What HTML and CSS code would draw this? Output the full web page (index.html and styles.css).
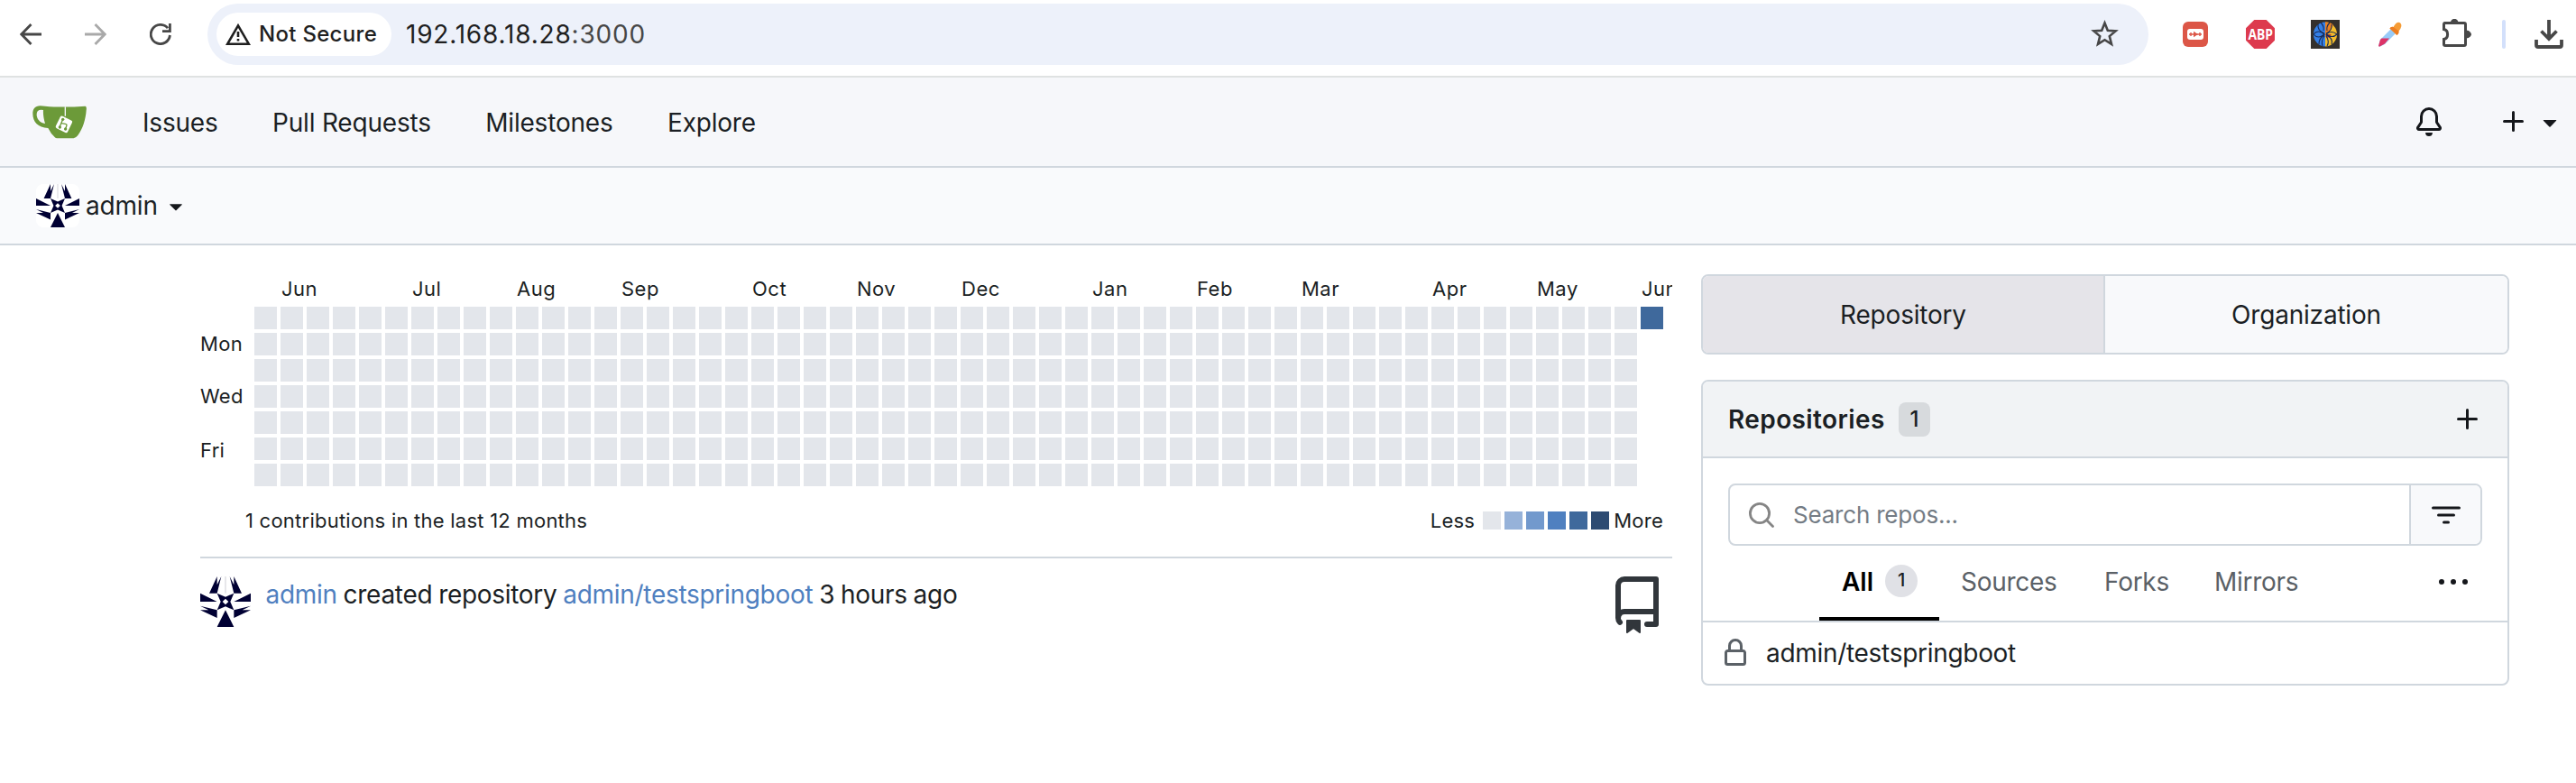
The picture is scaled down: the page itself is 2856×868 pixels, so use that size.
FILE: index.html
```html
<!DOCTYPE html>
<html lang="en">
<head>
<meta charset="utf-8">
<title>admin - Dashboard</title>
<link rel="stylesheet" href="styles.css">
</head>
<body>
<svg class="defs" width="0" height="0">
  <symbol id="avatar" viewBox="0 0 168 168">
    <rect width="168" height="168" fill="#fff"/>
    <path d="M84 0V56" stroke="#cfcfd6" stroke-width="3"/>
    <g fill="#000033">
      <path d="M30 56L56 0V28L70 0L56 56ZM138 56L112 0V28L98 0L112 56Z"/>
      <path d="M0 56L56 84H0ZM168 56L112 84H168Z"/>
      <path d="M56 56L84 68L112 56L100 84L112 112L84 100L56 112L68 84Z"/>
      <path d="M56 138L0 112H28L0 98L56 112ZM112 138L168 112H140L168 98L112 112Z"/>
      <path d="M56 168L84 112L112 168Z"/>
    </g>
    <path d="M84 74L94 84L84 94L74 84Z" fill="#fff"/>
  </symbol>
  <symbol id="plus" viewBox="0 0 16 16"><path d="M7.75 2a.75.75 0 0 1 .75.75V7h4.25a.75.75 0 0 1 0 1.5H8.5v4.25a.75.75 0 0 1-1.5 0V8.5H2.75a.75.75 0 0 1 0-1.5H7V2.75A.75.75 0 0 1 7.75 2Z"/></symbol>
  <symbol id="caret" viewBox="0 0 16 16"><path d="m4.427 7.427 3.396 3.396a.25.25 0 0 0 .354 0l3.396-3.396A.25.25 0 0 0 11.396 7H4.604a.25.25 0 0 0-.177.427Z"/></symbol>
</svg>

<header class="browser">
  <div class="nav-buttons">
    <svg width="24" height="24" viewBox="0 0 24 24" fill="none" stroke="#474747" stroke-width="2.8"><path d="M24 12H2M12.5 1L1.8 12L12.5 23"/></svg>
    <svg width="24" height="24" viewBox="0 0 24 24" fill="none" stroke="#a9a9a9" stroke-width="2.8"><path d="M0 12H22M11.5 1L22.2 12L11.5 23"/></svg>
    <svg width="24" height="24" viewBox="0 0 24 24" fill="none" stroke="#474747" stroke-width="2.8"><path d="M22.4 13A10.6 10.6 0 1 1 20 5.2M22.4 0V8.6H14"/></svg>
  </div>
  <div class="omnibox">
    <div class="chip">
      <svg width="28" height="24" viewBox="0 0 28 24" fill="none" stroke="#1f1f1f" stroke-width="2.6"><path d="M14 2.4L25.8 22.7H2.2ZM14 9V15M14 17V19.6"/></svg>
      <span>Not Secure</span>
    </div>
    <span class="url">192.168.18.28<span class="port">:3000</span></span>
    <svg class="star" width="31" height="32" viewBox="0 0 31 32" fill="none" stroke="#474747" stroke-width="2.6"><path d="M15.500 3.600L18.800 11.800L27.600 12.400L20.800 18.100L23 26.900L15.500 22.200L8 26.900L10.200 18.100L3.400 12.400L12.200 11.800Z"/></svg>
  </div>
  <div class="extensions">
    <svg width="32" height="32" viewBox="0 0 32 32"><rect x="2" y="2" width="28" height="28" rx="6" fill="#dc5647"/><rect x="7" y="10" width="18" height="12" rx="3" fill="#fff"/><path d="M9 16H23M11 14V18M21 14V18" stroke="#dc5647" stroke-width="1.400"/><path d="M14 12.800L19 16L14 19.200Z" fill="#dc5647"/></svg>
    <svg width="32" height="32" viewBox="0 0 32 32"><path d="M9.300 0H22.700L32 9.300V22.700L22.700 32H9.300L0 22.700V9.300Z" fill="#dd3a4e"/><text class="abp" x="2.500" y="21.800" textLength="27.500" lengthAdjust="spacingAndGlyphs">ABP</text></svg>
    <svg width="32" height="32" viewBox="0 0 32 32"><rect width="32" height="32" fill="#34302c"/><path d="M16 2.500A13 13.500 0 0 0 16 29.500Z" fill="#347fe6"/><path d="M16 2.500A13 13.500 0 0 1 16 29.500Z" fill="#f4bd2b"/><path d="M16 2.500C21 2.500 23 4 25 6L20 13L16 16Z" fill="#ee8220"/><path d="M16 16L23 16L18 21Z" fill="#da3b24"/><path d="M3 16Q8 10 15 16Q8 22 3 16M15 15Q7 12 8 5M15 17Q9 20 9 27M17 15Q24 12 23 5M17 17Q25 20 23 27M17 16Q23 11 29 16Q24 21 17 16M11 3Q15 7 14 12M13 29Q11 23 15 18M21 3Q17 7 18 12M18 29Q21 24 17 18" stroke="#172b57" stroke-width="1.100" fill="none"/></svg>
    <svg width="32" height="32" viewBox="0 0 32 32"><path d="M3 29L5 22L18 9L23 14L10 27L4.500 29.800Z" fill="#98cbf8"/><path d="M3 29L5 22L6.500 20.500H15L10 26.500L4 29.800Z" fill="#dd3467"/><path d="M15.500 9.500Q17 7 19.500 8Q23 1.500 27 3.200Q30.500 6 25.500 12.500Q26 15 23.500 17Z" fill="#f59b35"/><path d="M15.500 9.500Q17 7 19.500 8L25.500 12.500Q26 15 23.500 17Z" fill="#ed7d21"/></svg>
    <svg class="puzzle" width="34" height="34" viewBox="0 1 34 34" fill="none" stroke="#474747" stroke-width="3"><path d="M3.500 5.500H26Q27.500 5.500 27.500 7V29Q27.500 30.500 26 30.500H5Q3.500 30.500 3.500 29V23.500C9 22.500 9 13.500 3.500 12.500V7Q3.500 5.500 5 5.500Z"/><path d="M11 5A4.200 4.200 0 0 1 19.400 5ZM28 13.500C32.500 13.500 34 17 34 18S32.500 22.500 28 22.500Z" fill="#474747" stroke="none"/></svg>
    <span class="divider"></span>
    <svg class="download" width="32" height="32" viewBox="0 0 32 32" fill="none" stroke="#474747" stroke-width="3.800"><path d="M16 0V21M7.500 12.500L16 21L24.500 12.500M2 22V28Q2 30 4 30H28Q30 30 30 28V22"/></svg>
  </div>
</header>

<nav class="topbar">
  <svg class="logo" width="60" height="37" viewBox="0 0 180 111"><path d="M42 2C82 6 130 5 176 2Q181 3 179 16C177 45 168 77 151 99Q143 109 137 109H82Q77 109 74 105Q62 95 52 75C18 73 1 55 1 27C1 13 8 1 26 1ZM18 18C8 30 17 58 42 60C37 44 35 26 36 15Q23 13 18 18Z" fill="#6c9a39" fill-rule="evenodd"/><path d="M109 4V35" stroke="#f6f7fa" stroke-width="4"/><rect x="83" y="40" width="44" height="45" rx="6" transform="rotate(26 105 62)" fill="#fff"/><path d="M101 46L91 70M96 59L109 61Q116 62 113 69L108 81" fill="none" stroke="#6c9a39" stroke-width="4"/><g fill="#6c9a39"><circle cx="101" cy="46" r="5"/><circle cx="91" cy="72" r="5"/><circle cx="110" cy="78" r="5"/></g></svg>
  <a>Issues</a>
  <a>Pull Requests</a>
  <a>Milestones</a>
  <a>Explore</a>
  <div class="topbar-right">
    <svg width="32" height="32" viewBox="0 0 16 16" fill="#15171b"><path d="M8 16a2 2 0 0 0 1.985-1.750c.017-.137-.097-.250-.235-.250h-3.500c-.138 0-.252.113-.235.250A2 2 0 0 0 8 16ZM3 5a5 5 0 0 1 10 0v2.947c0 .050.015.098.042.139l1.703 2.555A1.519 1.519 0 0 1 13.482 13H2.518a1.516 1.516 0 0 1-1.263-2.360l1.703-2.554A.255.255 0 0 0 3 7.947Zm5-3.500A3.500 3.500 0 0 0 4.500 5v2.947c0 .346-.102.683-.294.970l-1.703 2.556a.017.017 0 0 0-.003.010l.001.006c0 .002.002.004.004.006l.006.004.007.001h10.964l.007-.001.006-.004.004-.006.001-.007a.017.017 0 0 0-.003-.010l-1.703-2.554a1.745 1.745 0 0 1-.294-.970V5A3.500 3.500 0 0 0 8 1.500Z"/></svg>
    <svg class="add" width="32" height="32" fill="#15171b"><use href="#plus"/></svg>
    <svg width="32" height="32" fill="#15171b"><use href="#caret"/></svg>
  </div>
</nav>

<div class="context">
  <svg class="avatar-sm" width="48" height="48"><use href="#avatar"/></svg>
  <span>admin</span>
  <svg width="30" height="30" fill="#15171b"><use href="#caret"/></svg>
</div>

<main class="dashboard">
  <section class="activity">
    <div class="heatmap">
      <div class="months" id="months"></div>
      <div class="days"><span class="mon">Mon</span><span class="wed">Wed</span><span class="fri">Fri</span></div>
      <div class="cells" id="cells"></div>
    </div>
    <div class="legend">
      <span>1 contributions in the last 12 months</span>
      <div class="scale">
        <span>Less</span>
        <span class="swatches"><i class="l0"></i><i class="l1"></i><i class="l2"></i><i class="l3"></i><i class="l4"></i><i class="l5"></i></span>
        <span>More</span>
      </div>
    </div>
    <article class="feed-item">
      <svg width="56" height="56"><use href="#avatar"/></svg>
      <p><a>admin</a> created repository <a>admin/testspringboot</a> 3 hours ago</p>
      <svg class="repo-icon" width="64" height="64" viewBox="0 0 16 16" fill="#31363b"><path d="M2 2.500A2.500 2.500 0 0 1 4.500 0h8.750a.750.750 0 0 1 .750.750v12.500a.750.750 0 0 1-.750.750h-2.500a.750.750 0 0 1 0-1.500h1.750v-2h-8a1 1 0 0 0-.714 1.700.750.750 0 1 1-1.072 1.050A2.495 2.495 0 0 1 2 11.500Zm10.500-1h-8a1 1 0 0 0-1 1v6.708A2.486 2.486 0 0 1 4.500 9h8ZM5 12.250a.250.250 0 0 1 .250-.250h3.500a.250.250 0 0 1 .250.250v3.250a.250.250 0 0 1-.400.200l-1.450-1.087a.249.249 0 0 0-.300 0L5.400 15.700a.250.250 0 0 1-.400-.200Z"/></svg>
    </article>
  </section>

  <aside class="sidebar">
    <div class="switch"><a class="active">Repository</a><a>Organization</a></div>
    <div class="panel">
      <div class="panel-head">
        <strong>Repositories</strong><span class="count">1</span>
        <svg width="32" height="32" fill="#15171b"><use href="#plus"/></svg>
      </div>
      <div class="panel-search">
        <div class="search">
          <svg width="28" height="28" viewBox="0 0 28 28" fill="none" stroke="#858585" stroke-width="2.800" stroke-linecap="round"><circle cx="12" cy="12" r="10.600"/><path d="M19.800 19.800L26.500 26.500"/></svg>
          <span>Search repos...</span>
        </div>
        <div class="filter"><svg width="32" height="22" viewBox="0 0 32 22" stroke="#15171b" stroke-width="3" stroke-linecap="round"><path d="M1.500 3H30.500M7.500 11H24.500M13.500 19H18.500"/></svg></div>
      </div>
      <div class="tabs">
        <a class="active"><span>All</span><span class="pill">1</span></a>
        <a class="sources">Sources</a>
        <a class="forks">Forks</a>
        <a>Mirrors</a>
        <svg class="more" width="34" height="8" viewBox="0 0 34 8" fill="#15171b"><circle cx="4" cy="4" r="3"/><circle cx="17" cy="4" r="3"/><circle cx="30" cy="4" r="3"/></svg>
      </div>
      <div class="repo-row">
        <svg width="32" height="32" viewBox="0 0 16 16" fill="#5b6167"><path d="M4 4a4 4 0 0 1 8 0v2h.250c.966 0 1.750.784 1.750 1.750v5.500A1.750 1.750 0 0 1 12.250 15h-8.500A1.750 1.750 0 0 1 2 13.250v-5.500C2 6.784 2.784 6 3.750 6H4Zm8.250 3.500h-8.500a.250.250 0 0 0-.250.250v5.500c0 .138.112.250.250.250h8.500a.250.250 0 0 0 .250-.250v-5.500a.250.250 0 0 0-.250-.250ZM10.500 6V4a2.500 2.500 0 1 0-5 0v2Z"/></svg>
        <span>admin/testspringboot</span>
      </div>
    </div>
  </aside>
</main>
<script src="app.js"></script>
</body>
</html>
```
FILE: styles.css
```css
* { box-sizing: border-box; }
body { margin: 0; width: 2856px; height: 868px; overflow: hidden; background: #fff; color: #1b1f24; font: 28px/40px Inter, "Noto Sans", sans-serif; letter-spacing: -.2px; }
svg { display: block; flex: none; }
.defs { position: absolute; }
span, strong, a { white-space: nowrap; }

.browser { height: 86px; border-bottom: 2px solid #dfe2e2; display: flex; align-items: flex-start; }
.nav-buttons { display: flex; flex: none; gap: 48px; padding: 26px 0 0 22px; width: 230px; }
.omnibox { flex: none; width: 2152px; height: 68px; margin-top: 4px; border-radius: 34px; background: #edf1fa; display: flex; align-items: center; padding-left: 10px; }
.chip { flex: none; width: 194px; height: 48px; border-radius: 24px; background: #fff; display: flex; align-items: center; gap: 9px; padding-left: 10px; font-size: 24px; font-weight: 500; letter-spacing: .3px; color: #1f1f1f; }
.url { margin-left: 16px; color: #1f1f1f; letter-spacing: .8px; }
.port { color: #474747; }
.star { margin-left: auto; margin-right: 33px; }
.extensions { flex: none; display: flex; align-items: center; height: 76px; padding-left: 36px; }
.extensions svg { margin-right: 40px; }
.extensions .puzzle { margin-right: 34px; }
.extensions .download { margin-right: 0; }
.abp { font: 700 16px "Open Sans", sans-serif; letter-spacing: 0; fill: #fff; }
.divider { width: 4px; height: 32px; border-radius: 2px; background: #d3e0fb; margin-right: 32px; }

.topbar { height: 100px; background: #f6f7fa; border-bottom: 2px solid #d0d7de; display: flex; align-items: center; padding-left: 36px; }
.topbar a { margin-right: 60.500px; padding-top: 1px; }
.logo { margin-right: 62px; }
.topbar-right { margin-left: auto; display: flex; align-items: center; padding-right: 13px; }
.add { margin: 0 8px 0 62px; }

.context { height: 86px; background: #f9fafc; border-bottom: 2px solid #d0d7de; display: flex; align-items: center; padding-left: 40px; }
.avatar-sm { border-radius: 8px; margin-right: 7px; }
.context span { margin-right: 5px; }

.dashboard { display: flex; padding: 32px 0 0 222px; gap: 32px; }
.activity { width: 1632px; }
.heatmap { display: grid; grid-template-columns: 60px 1572px; grid-template-rows: 36px 203px; font-size: 22px; line-height: 29px; letter-spacing: .3px; overflow: hidden; }
.months { grid-column: 2; display: grid; grid-template-columns: repeat(54, 29px); padding: 2px 0 0 1px; letter-spacing: .5px; }
.days { display: grid; grid-template-rows: repeat(7, 29px); }
.mon { grid-row: 2; margin-top: -2px; }
.wed { grid-row: 4; margin-top: -2px; }
.fri { grid-row: 6; }
.cells { display: grid; grid-auto-flow: column; grid-template-rows: repeat(7, 24.500px); grid-auto-columns: 24.500px; gap: 4.500px; }
.cells i, .l0 { background: #e3e6eb; }
.l1 { background: #96b2d9; }
.l2 { background: #7299cd; }
.l3 { background: #4f80c0; }
.cells i.l4, .l4 { background: #3f699c; }
.l5 { background: #2d4b72; }
.legend { display: flex; justify-content: space-between; align-items: center; height: 74px; padding: 0 10px 6px 50px; font-size: 22px; letter-spacing: .24px; }
.scale { display: flex; align-items: center; }
.swatches { display: flex; gap: 4px; margin: 0 5px 0 9px; }
.swatches i { width: 20px; height: 20px; }
.feed-item { border-top: 2px solid #d0d7de; display: flex; padding-top: 20px; }
.feed-item p { margin: 0 0 0 16.500px; letter-spacing: -.3px; word-spacing: -.7px; }
.feed-item a { color: #4f80c0; }
.repo-icon { margin-left: auto; margin-right: 7px; }

.sidebar { width: 896px; }
.switch { height: 89px; border: 2px solid #d0d7de; border-radius: 8px; display: grid; grid-template-columns: 1fr 1fr; overflow: hidden; }
.switch a { display: flex; align-items: center; justify-content: center; background: #f8f9fb; }
.switch .active { background: #e5e4e9; border-right: 2px solid #d0d7de; }
.panel { margin-top: 28px; height: 339px; border: 2px solid #d0d7de; border-radius: 8px; overflow: hidden; }
.panel-head { height: 85px; background: #f1f3f5; border-bottom: 2px solid #d0d7de; display: flex; align-items: center; padding: 0 28px; }
.panel-head strong { font-weight: 600; letter-spacing: .4px; }
.count { width: 35px; height: 38px; border-radius: 8px; background: #d7dadd; font-size: 24px; font-weight: 500; line-height: 38px; text-align: center; margin-left: 15px; }
.panel-head svg { margin-left: auto; }
.panel-search { display: flex; margin: 28px 28px 0; height: 69px; border: 2px solid #d0d7de; border-radius: 8px; overflow: hidden; }
.search { flex: 1; display: flex; align-items: center; padding-left: 21px; gap: 21px; color: #747c85; font-size: 26px; }
.filter { width: 79px; border-left: 2px solid #d0d7de; background: #f8f9fb; display: flex; align-items: center; justify-content: center; }
.tabs { height: 85px; border-bottom: 2px solid #d0d7de; display: flex; padding-left: 129px; color: #5b6167; letter-spacing: -.28px; }
.tabs a { display: flex; padding-top: 20px; }
.tabs .active { width: 133px; padding-left: 25px; border-bottom: 4px solid #000; color: #000; font-weight: 600; letter-spacing: 0; }
.pill { width: 36px; height: 36px; border-radius: 18px; background: #e0e1e6; color: #1b1f24; font-size: 20px; font-weight: 500; line-height: 35px; text-align: center; margin: 1px 0 0 13px; }
.sources { margin-left: 24px; width: 159px; }
.forks { width: 122px; }
.more { margin: 36px 43px 0 auto; }
.repo-row { display: flex; align-items: center; height: 68px; padding-left: 20px; gap: 18px; letter-spacing: -.3px; }
```
FILE: app.js
```js
const months = [["Jun", 1], ["Jul", 6], ["Aug", 10], ["Sep", 14], ["Oct", 19], ["Nov", 23], ["Dec", 27], ["Jan", 32], ["Feb", 36], ["Mar", 40], ["Apr", 45], ["May", 49], ["Jun", 53]];
const monthRow = document.getElementById("months");
for (const [name, week] of months) {
  const label = document.createElement("span");
  label.textContent = name;
  label.style.gridColumn = week + 1;
  monthRow.append(label);
}
const cells = document.getElementById("cells");
for (let day = 0; day < 53 * 7 + 1; day++) {
  const cell = document.createElement("i");
  if (day === 53 * 7) cell.className = "l4";
  cells.append(cell);
}
```
